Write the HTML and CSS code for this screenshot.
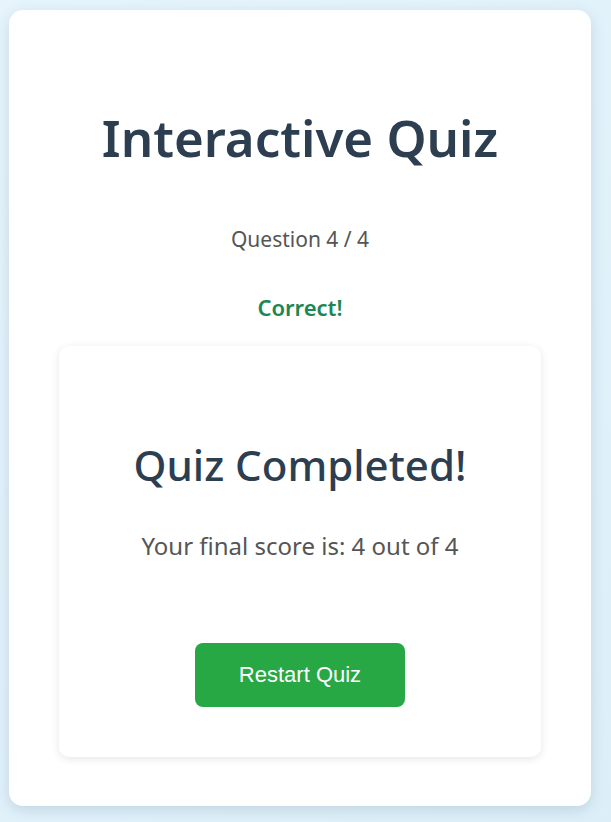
FILE: index.html
```html
<!DOCTYPE html>
<html lang="en">
<head>
<meta charset="utf-8">
<title>Interactive Quiz</title>
<link rel="stylesheet" href="styles.css">
</head>
<body>
<main class="quiz-card">
  <h1 class="title">Interactive Quiz</h1>
  <p class="progress">Question 4 / 4</p>
  <p class="feedback">Correct!</p>
  <section class="result">
    <h2 class="result-title">Quiz Completed!</h2>
    <p class="score">Your final score is: 4 out of 4</p>
    <button class="restart" type="button">Restart Quiz</button>
  </section>
</main>
</body>
</html>
```
FILE: styles.css
```css
* { box-sizing: border-box; }
html, body { height: 100%; }
body {
  margin: 0;
  padding: 10px 20px 16px 9px;
  background: linear-gradient(135deg, #e6f4fc 0%, #dcefF9 100%);
  font-family: "Noto Sans", "Open Sans", sans-serif;
}
.quiz-card {
  background: #fff;
  border-radius: 14px;
  box-shadow: 0 4px 14px rgba(60, 90, 120, 0.18);
  padding: 97px 50px 49px;
  text-align: center;
  height: 796px;
}
.title {
  margin: 0;
  font-size: 51px;
  font-weight: 600;
  color: #2c3e50;
  line-height: 60px;
}
.progress {
  margin: 58px 0 0;
  font-size: 21px;
  color: #555;
  line-height: 28px;
}
.feedback {
  margin: 40px 0 0;
  font-size: 22px;
  font-weight: 600;
  color: #1a8754;
  line-height: 28px;
}
.result {
  margin-top: 25px;
  border-radius: 10px;
  box-shadow: 0 2px 8px rgba(0, 0, 0, 0.1);
  padding: 94px 20px 50px;
}
.result-title {
  margin: 0;
  font-size: 42px;
  font-weight: 500;
  color: #2c3e50;
  line-height: 50px;
}
.score {
  margin: 41px 0 0;
  font-size: 24px;
  color: #555;
  line-height: 30px;
}
.restart {
  display: block;
  margin: 82px auto 0;
  width: 210px;
  height: 64px;
  border: 0;
  border-radius: 8px;
  background: #28a745;
  color: #fff;
  font-family: "Liberation Sans", Arial, sans-serif;
  font-size: 22px;
}
```
